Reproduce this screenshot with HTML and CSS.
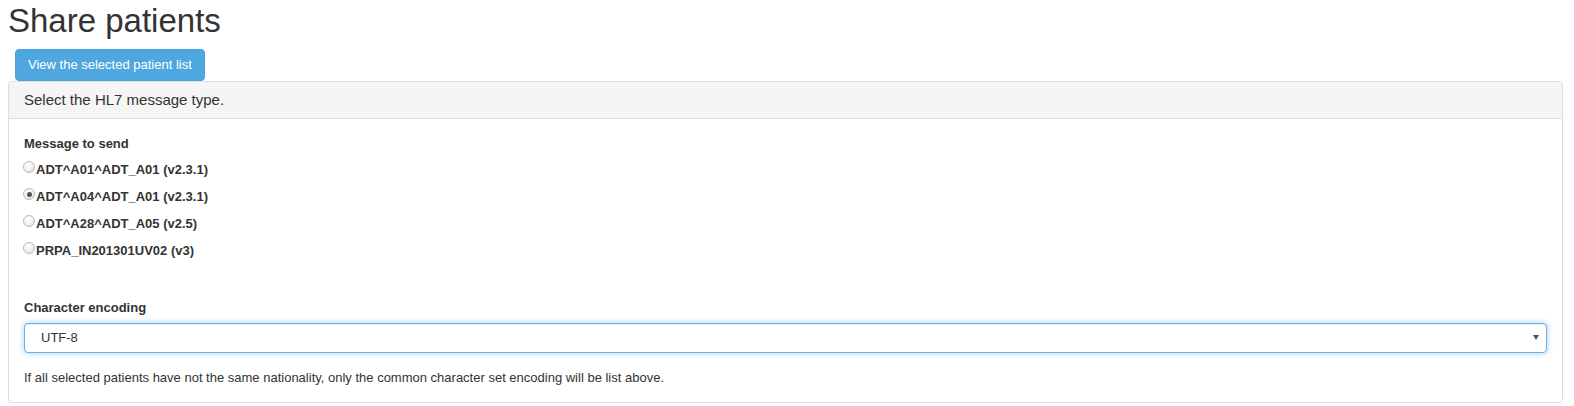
FILE: index.html
```html
<!DOCTYPE html>
<html lang="en">
<head>
<meta charset="utf-8">
<title>Share patients</title>
<link rel="stylesheet" href="styles.css">
</head>
<body>
<h1 class="page-title">Share patients</h1>
<div class="actions">
  <button class="btn-view" type="button">View the selected patient list</button>
</div>
<div class="panel">
  <div class="panel-heading">Select the HL7 message type.</div>
  <div class="panel-body">
    <div class="field-label">Message to send</div>
    <div class="radio-list">
      <label class="radio-row"><input type="radio" name="msg" class="radio"><span>ADT^A01^ADT_A01 (v2.3.1)</span></label>
      <label class="radio-row"><input type="radio" name="msg" class="radio" checked><span>ADT^A04^ADT_A01 (v2.3.1)</span></label>
      <label class="radio-row"><input type="radio" name="msg" class="radio"><span>ADT^A28^ADT_A05 (v2.5)</span></label>
      <label class="radio-row"><input type="radio" name="msg" class="radio"><span>PRPA_IN201301UV02 (v3)</span></label>
    </div>
    <div class="field-label encoding-label">Character encoding</div>
    <div class="select-wrap">
      <div class="select-box">UTF-8</div>
      <span class="select-arrow"></span>
    </div>
    <p class="help">If all selected patients have not the same nationality, only the common character set encoding will be list above.</p>
  </div>
</div>
</body>
</html>
```
FILE: styles.css
```css
html, body {
  background: #ffffff;
}
body {
  margin: 0 8px;
  font-family: "Liberation Sans", Arial, sans-serif;
  color: #333333;
  font-size: 13px;
  line-height: 20px;
}
.page-title {
  margin: 2px 0 0 0;
  font-size: 33px;
  line-height: 38px;
  font-weight: 400;
  color: #333333;
}
.actions {
  margin-top: 9px;
  padding-left: 7px;
  display: flex;
}
.btn-view {
  font-family: "Liberation Sans", Arial, sans-serif;
  font-size: 13px;
  line-height: 20px;
  color: #ffffff;
  background: #4ea7de;
  border: 1px solid #48a0d6;
  border-radius: 4px;
  padding: 5px 12px;
  margin: 0;
  cursor: pointer;
}
.panel {
  margin-right: 3px;
  border: 1px solid #dddddd;
  border-radius: 4px;
  box-shadow: 0 1px 1px rgba(0,0,0,0.05);
}
.panel-heading {
  background: #f5f5f5;
  border-bottom: 1px solid #dddddd;
  border-radius: 3px 3px 0 0;
  padding: 0 15px;
  height: 36px;
  display: flex;
  align-items: center;
  font-size: 15px;
  color: #333333;
}
.panel-body {
  padding: 15px 15px 14px 15px;
}
.field-label {
  font-weight: 700;
  font-size: 13px;
  line-height: 20px;
}
.radio-list {
  margin-top: 6px;
  display: flex;
  flex-direction: column;
  gap: 7px;
}
.radio-row {
  display: flex;
  align-items: flex-start;
  font-weight: 700;
  height: 20px;
}
.radio {
  appearance: none;
  -webkit-appearance: none;
  width: 12px;
  height: 12px;
  margin: 1px 1px 0 -1px;
  border-radius: 50%;
  border: 1px solid #b9b9b9;
  background: radial-gradient(circle at 35% 30%, #ffffff 0%, #f3f3f3 45%, #dcdcdc 100%);
  position: relative;
  flex: none;
}
.radio:checked::after {
  content: "";
  position: absolute;
  left: 2.5px;
  top: 2.5px;
  width: 5px;
  height: 5px;
  border-radius: 50%;
  background: #555555;
}
.encoding-label {
  margin-top: 37px;
  margin-bottom: 5px;
}
.select-wrap {
  position: relative;
}
.select-box {
  height: 28px;
  border: 1px solid #66afe9;
  border-radius: 4px;
  box-shadow: inset 0 1px 1px rgba(0,0,0,0.075), 0 0 6px rgba(102,175,233,0.6);
  padding: 0 16px;
  display: flex;
  align-items: center;
  font-size: 13px;
  color: #333333;
  background: #ffffff;
}
.select-arrow {
  position: absolute;
  right: 8px;
  top: 12px;
  width: 0;
  height: 0;
  border-left: 3.5px solid transparent;
  border-right: 3.5px solid transparent;
  border-top: 5px solid #555555;
}
.help {
  margin: 15px 0 0 0;
  font-size: 13px;
  line-height: 20px;
  color: #333333;
}
```
